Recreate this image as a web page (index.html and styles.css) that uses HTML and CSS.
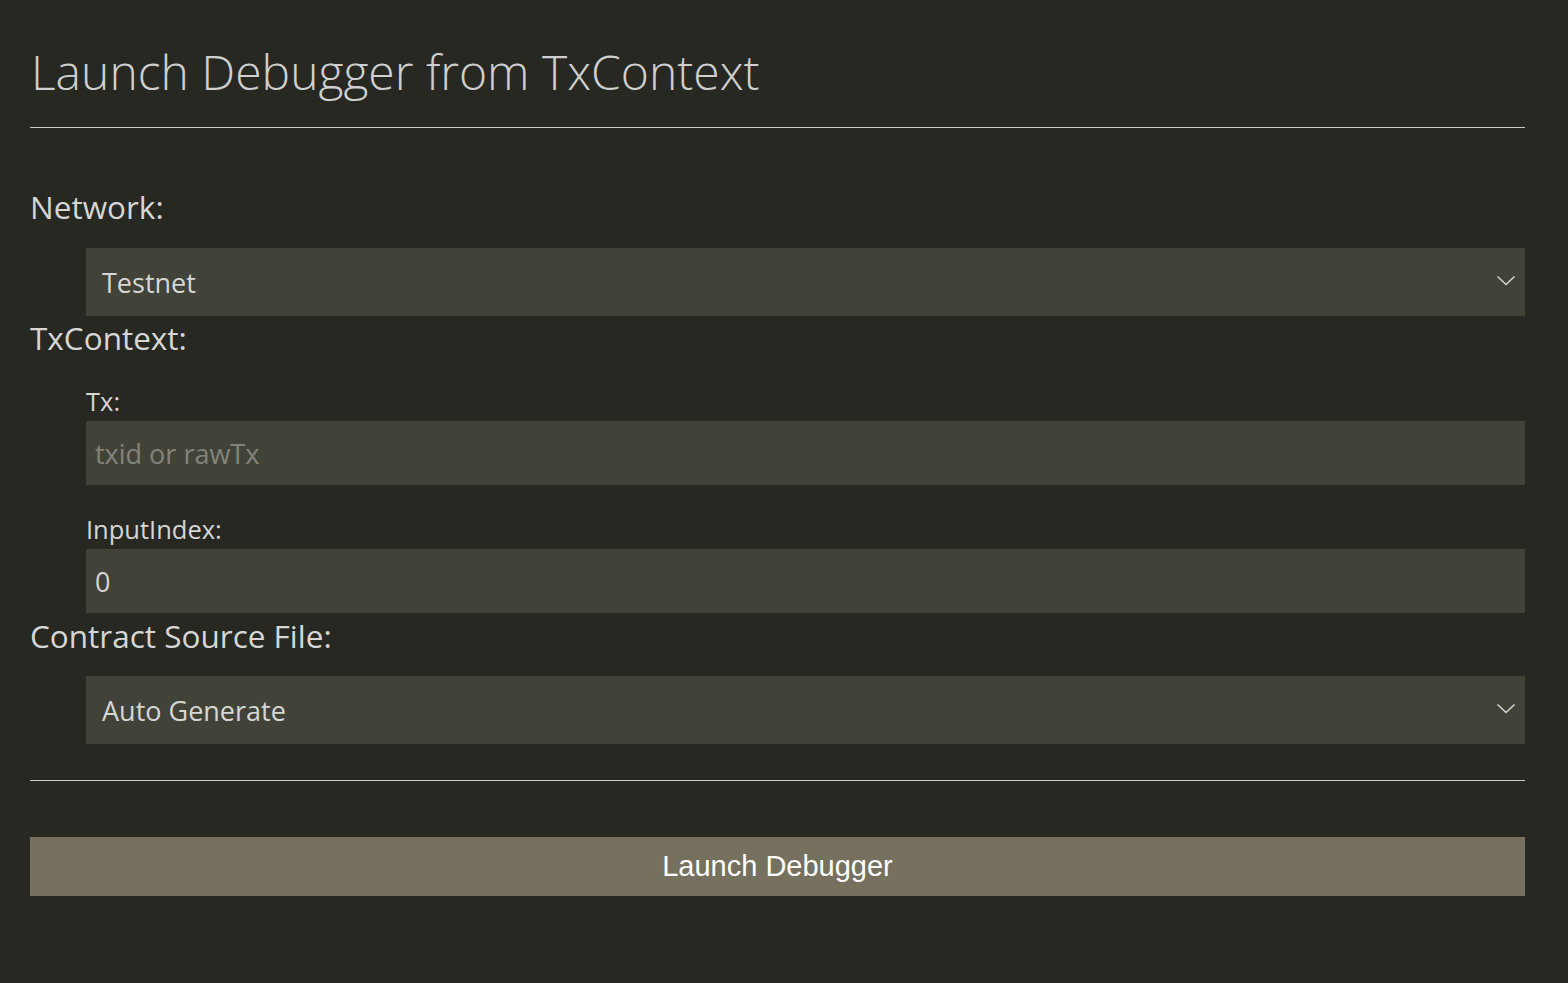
FILE: index.html
```html
<!DOCTYPE html>
<html lang="en">
<head>
<meta charset="utf-8">
<title>Launch Debugger from TxContext</title>
<link rel="stylesheet" href="styles.css">
</head>
<body>
<main class="page">
  <h1 class="title">Launch Debugger from TxContext</h1>
  <hr class="rule rule-top">
  <form class="form">
    <label class="label label-network">Network:</label>
    <div class="select-wrap">
      <select class="select">
        <option>Testnet</option>
        <option>Mainnet</option>
      </select>
      <svg class="chevron" width="20" height="12" viewBox="0 0 20 12"><path d="M1.5 1.5 L10 9.5 L18.5 1.5" fill="none" stroke="#d4d4d4" stroke-width="1.6"/></svg>
    </div>
    <label class="label label-ctx">TxContext:</label>
    <div class="sub">
      <label class="sublabel sublabel-tx">Tx:</label>
      <input class="input" type="text" placeholder="txid or rawTx">
      <label class="sublabel sublabel-idx">InputIndex:</label>
      <input class="input" type="text" value="0">
    </div>
    <label class="label label-src">Contract Source File:</label>
    <div class="select-wrap">
      <select class="select">
        <option>Auto Generate</option>
      </select>
      <svg class="chevron" width="20" height="12" viewBox="0 0 20 12"><path d="M1.5 1.5 L10 9.5 L18.5 1.5" fill="none" stroke="#d4d4d4" stroke-width="1.6"/></svg>
    </div>
    <hr class="rule rule-bottom">
    <button class="button" type="button">Launch Debugger</button>
  </form>
</main>
</body>
</html>
```

FILE: styles.css
```css
html, body {
  margin: 0;
  padding: 0;
  background: #272822;
}
body {
  font-family: "Open Sans", "Noto Sans", sans-serif;
  color: #d6d6d6;
}
.page {
  padding: 0 43px 40px 30px;
}
.title {
  margin: 40px 0 0 1px;
  font-size: 48px;
  font-weight: 300;
  line-height: 64px;
  color: #cfcfcf;
}
.rule {
  border: 0;
  height: 1px;
  background: #c9c9c9;
  margin: 0;
}
.rule-top {
  margin-top: 23px;
}
.form {
  display: flex;
  flex-direction: column;
}
.label {
  display: block;
  font-size: 31.5px;
  line-height: 44px;
  margin-left: 0;
}
.label-network {
  margin-top: 57px;
  margin-bottom: 19px;
}
.label-src {
  margin-top: 1px;
  margin-bottom: 18px;
}
.select-wrap {
  position: relative;
  margin-left: 56px;
}
.select {
  appearance: none;
  -webkit-appearance: none;
  display: block;
  width: 100%;
  height: 68px;
  border: 0;
  border-radius: 0;
  outline: none;
  background: #414339;
  color: #d6d6d6;
  font-family: inherit;
  font-size: 27px;
  padding: 0 0 0 16px;
}
.chevron {
  position: absolute;
  right: 9px;
  top: 27px;
}
.sub {
  display: flex;
  flex-direction: column;
  padding-left: 56px;
}
.sublabel {
  display: block;
  font-size: 25.5px;
  line-height: 36px;
  margin-bottom: 2px;
}
.sublabel-tx {
  margin-top: 23px;
}
.sublabel-idx {
  margin-top: 26px;
}
.input {
  display: block;
  box-sizing: border-box;
  width: 100%;
  height: 64px;
  border: 0;
  border-radius: 0;
  outline: none;
  background: #414339;
  color: #d6d6d6;
  font-family: inherit;
  font-size: 27px;
  padding: 0 0 0 9px;
}
.input::placeholder {
  color: #83837c;
}
.rule-bottom {
  margin-top: 36px;
}
.button {
  display: block;
  width: 100%;
  height: 59px;
  margin-top: 56px;
  border: 0;
  border-radius: 0;
  background: #75715e;
  color: #ffffff;
  font-family: "Liberation Sans", Arial, sans-serif;
  font-size: 29px;
  cursor: pointer;
}
```
